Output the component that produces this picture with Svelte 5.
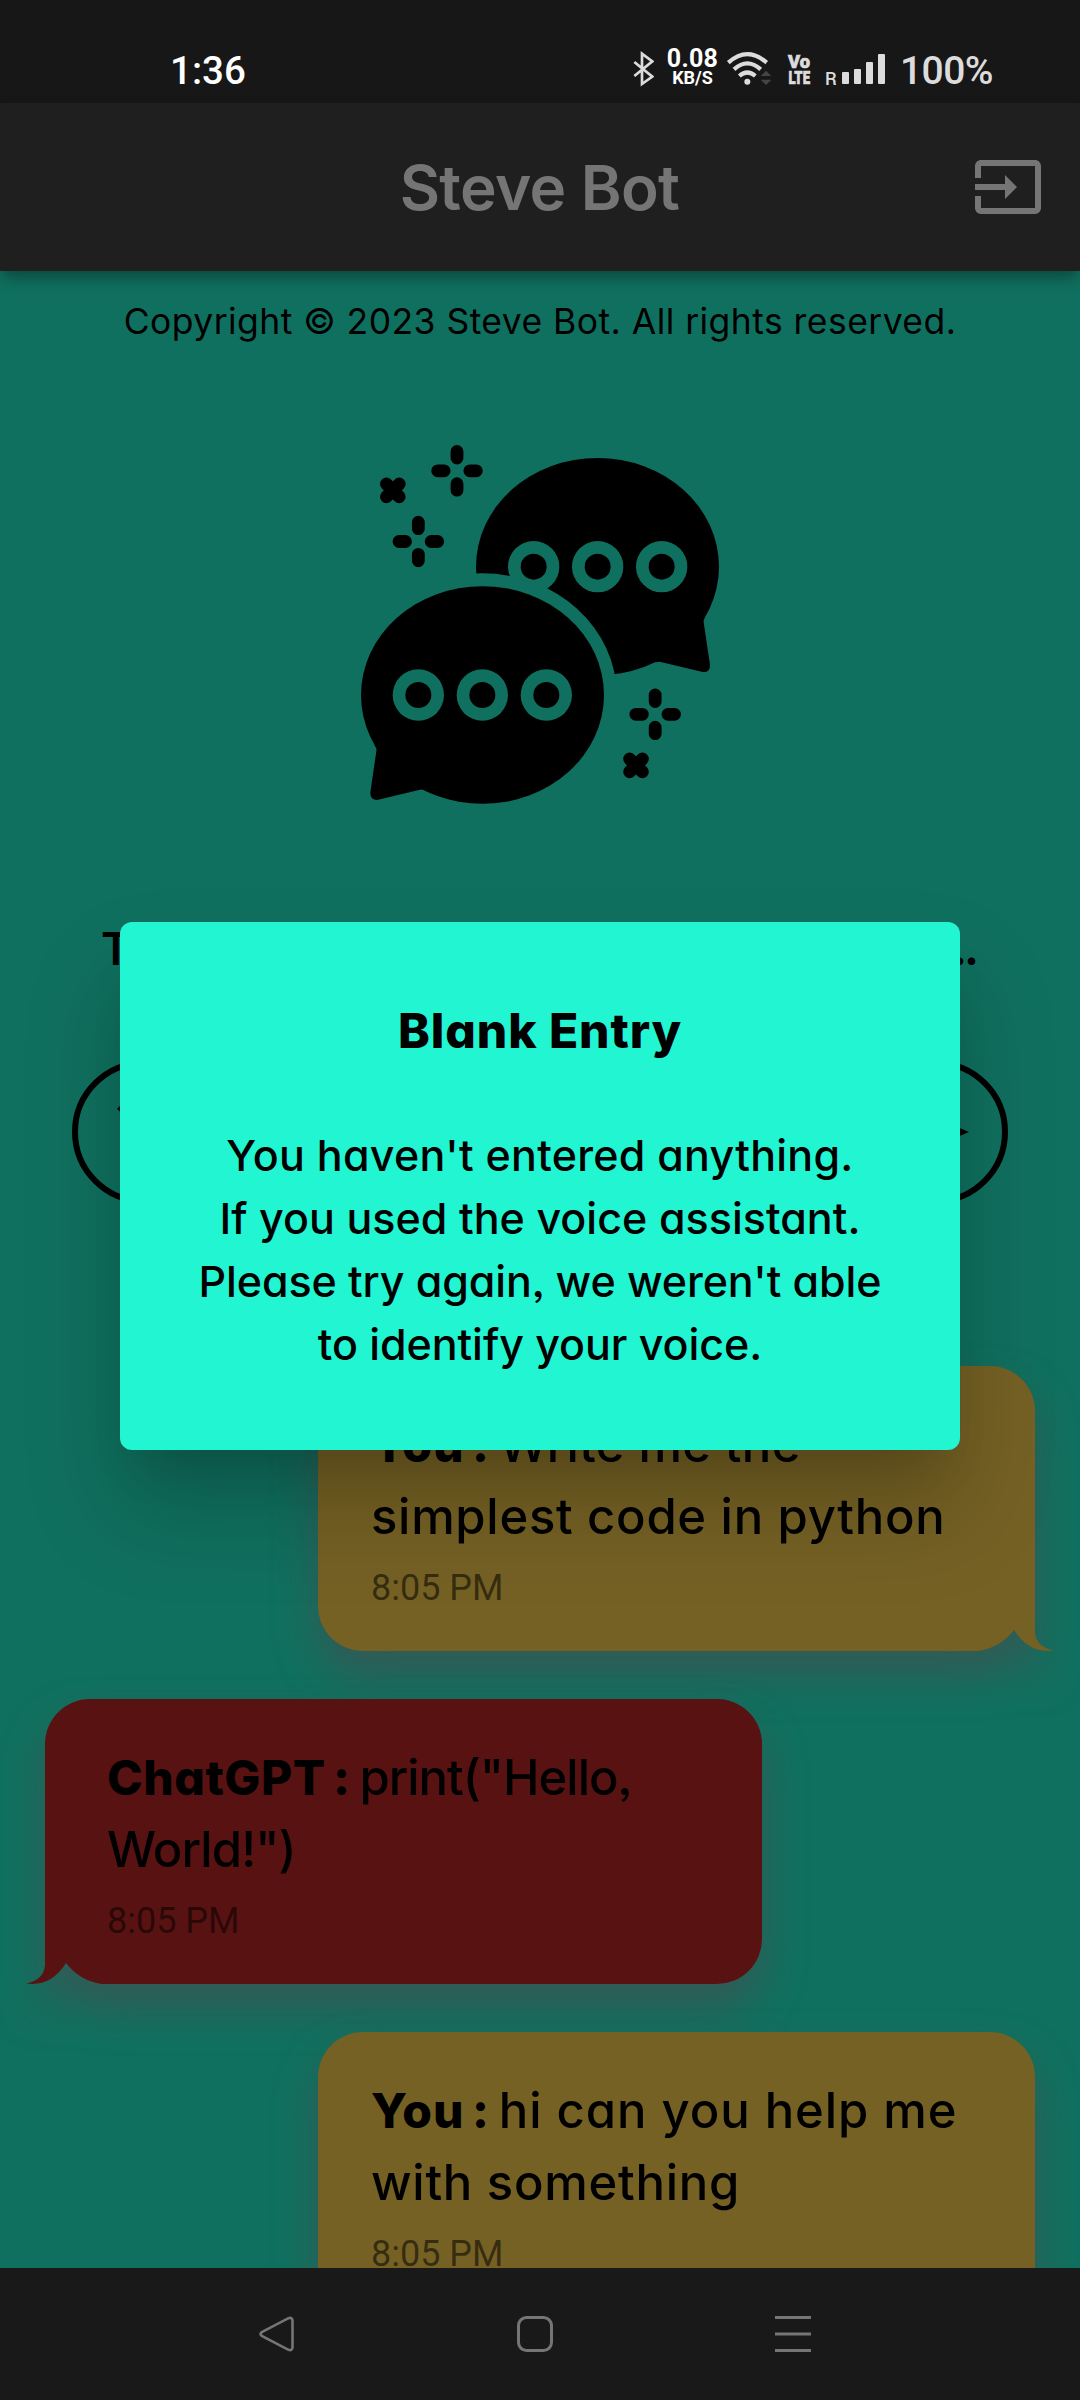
<script>
  const messages = [
    {
      author: 'You', mine: true, time: '8:05 PM', nameTrack: 1,
      first: 'Write me the', firstTrack: 0.35,
      second: 'simplest code in python', secondTrack: 0.7
    },
    {
      author: 'ChatGPT', mine: false, time: '8:05 PM', nameTrack: 0.55,
      first: 'print("Hello,', firstTrack: -1,
      second: 'World!")', secondTrack: -0.9
    },
    {
      author: 'You', mine: true, time: '8:05 PM', nameTrack: 1,
      first: 'hi can you help me', firstTrack: 0.95,
      second: 'with something', secondTrack: 0.72
    }
  ];

  const dialogLines = [
    { text: "You haven't entered anything.", track: 0.25 },
    { text: 'If you used the voice assistant.', track: 0.04 },
    { text: "Please try again, we weren't able", track: -0.1 },
    { text: 'to identify your voice.', track: -0.06 }
  ];

  const sparkles = [[351, 122.5], [235, 334.5], [945.5, 853]];
  const crosses = [[158.5, 181], [888, 1006]];
  const dots = [[581, 410], [773, 410], [965, 410]];
  const frontDots = [[235, 795], [427, 795], [619, 795]];
</script>

<div class="screen">
  <div class="status">
    <span class="clock">1:36</span>
    <div class="indicators">
      <svg width="22" height="40" viewBox="96 57 66 120">
        <path d="M103 96L157 140L126 162V71L157 94L103 138" fill="none" stroke="#dcdcdc" stroke-width="8" />
      </svg>
      <div class="speed"><span>0.08</span><small>KB/S</small></div>
      <svg class="wifi" width="47" height="40" viewBox="378 57 141 120">
        <g fill="none" stroke="#dcdcdc" stroke-width="12.5">
          <path d="M385 98Q442 47 500 98" />
          <path d="M402 118Q442 82 482 118" />
          <path d="M418 138Q442 117 466 138" />
        </g>
        <circle cx="442" cy="155" r="9" fill="#dcdcdc" />
        <path d="M482 138L498 122L514 138ZM482 149H514L498 165Z" fill="#444" />
      </svg>
      <svg class="volte" width="23" height="40" viewBox="0 0 23 40" fill="#dcdcdc" stroke="#dcdcdc" stroke-width=".7">
        <text x="0" y="18.5" textLength="22" lengthAdjust="spacingAndGlyphs">Vo</text>
        <text x="0.5" y="35" textLength="21.5" lengthAdjust="spacingAndGlyphs">LTE</text>
      </svg>
      <svg class="signal" width="61" height="40" viewBox="0 0 61 40" fill="#dcdcdc">
        <text x="0" y="36">R</text>
        <rect x="17" y="23" width="7" height="12" rx="1" />
        <rect x="29" y="20" width="7" height="15" rx="1" />
        <rect x="41" y="13" width="7" height="22" rx="1" />
        <rect x="53" y="5" width="7" height="30" rx="1" />
      </svg>
      <span class="battery">100%</span>
    </div>
  </div>

  <header>
    <h1>Steve Bot</h1>
    <svg class="exit" width="72" height="72" viewBox="0 0 24 24" fill="#757575">
      <path d="M21 3.01H3c-1.1 0-2 .9-2 2V9h2V4.99h18v14.03H3V15H1v4.01c0 1.1.9 1.98 2 1.98h18c1.1 0 2-.88 2-1.98v-14c0-1.11-.9-2-2-2zM11 16l4-4-4-4v3H1v2h10v3z" />
    </svg>
  </header>

  <main>
    <p class="copyright">Copyright © 2023 Steve Bot. All rights reserved.</p>

    <svg class="hero" width="400" height="390" viewBox="0 0 1200 1170">
      <ellipse cx="772.5" cy="410" rx="364.5" ry="326" />
      <path d="M1095 560Q1090 569 1091 577L1110 704Q1111 728 1088 726L962 696Q955 694 948 697L800 640Z" />
      {#each dots as [x, y]}
        <circle class="gap" cx={x} cy={y} r="77" />
        <circle cx={x} cy={y} r="39" />
      {/each}
      <ellipse class="gap" cx="427" cy="795" rx="403" ry="365" />
      <ellipse cx="427.5" cy="795" rx="364.5" ry="326.5" />
      <path d="M103 944Q111 955 109 964L91 1087Q90 1110 111 1110L240 1079Q248 1077 257 1082L400 1020Z" />
      {#each frontDots as [x, y]}
        <circle class="gap" cx={x} cy={y} r="77" />
        <circle cx={x} cy={y} r="39" />
      {/each}
      <g fill="none" stroke="#000" stroke-width="38.5" stroke-linecap="round">
        {#each sparkles as [x, y]}
          <path transform="translate({x} {y})" d="M0-58V-38.5M0 38.5V58M-58 0H-38.5M38.5 0H58" />
        {/each}
        {#each crosses as [x, y]}
          <path transform="translate({x} {y})" d="M-19.2-19.2L19.2 19.2M19.2-19.2L-19.2 19.2" />
        {/each}
      </g>
    </svg>

    <div class="prompt"><span>T</span><span>...</span></div>

    <div class="entry">
      <svg width="72" height="72" viewBox="0 0 24 24">
        <path d="M19 11h-1.7c0 .74-.16 1.43-.43 2.05l1.23 1.23c.56-.98.9-2.09.9-3.28zm-4.02.17c0-.06.02-.11.02-.17V5c0-1.66-1.34-3-3-3S9 3.34 9 5v.18l5.98 5.99zM4.27 3L3 4.27l6.01 6.01V11c0 1.66 1.33 3 2.99 3 .22 0 .44-.03.65-.08l1.66 1.66c-.71.33-1.5.52-2.31.52-2.76 0-5.3-2.1-5.3-5.1H5c0 3.41 2.72 6.23 6 6.72V21h2v-3.28c.91-.13 1.77-.45 2.54-.9L19.73 21 21 19.73 4.27 3z" />
      </svg>
      <svg width="72" height="72" viewBox="0 0 24 24">
        <path d="M2.01 21L23 12 2.01 3 2 10l15 2-15 2z" />
      </svg>
    </div>

    <div class="messages">
      {#each messages as m}
        <article class:mine={m.mine}>
          <svg class="shape" width="760" height="290" viewBox="0 0 760 290">
            <path d="M45 0H672A45 45 0 0 1 717 45V266Q718 281 736 284.5Q711 288 696 264Q682 282 660 285H45A45 45 0 0 1 0 240V45A45 45 0 0 1 45 0Z" />
          </svg>
          <div class="body">
            <div class="line">
              <strong style:letter-spacing="{m.nameTrack}px">{m.author} :</strong>
              <span style:letter-spacing="{m.firstTrack}px">{m.first}</span>
            </div>
            <div class="line"><span style:letter-spacing="{m.secondTrack}px">{m.second}</span></div>
            <time>{m.time}</time>
          </div>
        </article>
      {/each}
    </div>
  </main>

  <nav>
    <svg width="36" height="36" viewBox="0 0 36 36">
      <path d="M3.2 15.8L29.5 2.2Q33.5 1 33.5 5V31Q33.5 35 29.5 33.8L3.2 20.2Q-.2 18 3.2 15.8Z" />
    </svg>
    <svg width="36" height="36" viewBox="0 0 36 36">
      <rect x="1.5" y="1.5" width="33" height="33" rx="8" stroke-width="3" />
    </svg>
    <svg width="36" height="36" viewBox="0 0 36 36">
      <path d="M0 1.5H36M0 18H36M0 34.5H36" stroke-width="3" />
    </svg>
  </nav>

  <section class="dialog">
    <h2>Blank Entry</h2>
    {#each dialogLines as line}
      <p style:letter-spacing="{line.track}px">{line.text}</p>
    {/each}
  </section>
</div>

<style>
  :global(body) { background: #10705f; }
  .screen {
    position: relative;
    display: flex;
    flex-direction: column;
    width: 1080px;
    height: 2400px;
    overflow: hidden;
    background: #10705f;
    color: #000;
    font-family: Inter, "Open Sans", sans-serif;
    font-feature-settings: "cv11", "ss03";
  }
  svg { display: block; flex: none; }
  h1, h2, p { margin: 0; }

  .status {
    display: flex;
    flex: none;
    box-sizing: border-box;
    height: 103px;
    padding: 35px 87px 0 170px;
    justify-content: space-between;
    background: #171717;
    font-family: Roboto, sans-serif;
    font-weight: 500;
  }
  .clock, .battery { font-size: 38.5px; line-height: 72px; }
  .clock { color: #fff; }
  .battery {
    width: 93px;
    margin: 3px 0 0 14px;
    color: #dcdcdc;
    font-size: 39px;
    letter-spacing: -.6px;
  }
  .indicators { display: flex; height: 68px; align-items: center; }
  .speed {
    display: flex;
    flex-direction: column;
    align-items: center;
    width: 51px;
    margin: 0 8px 0 13px;
    color: #fff;
    font-weight: 700;
    font-size: 25px;
    line-height: 18px;
  }
  .speed small { font-size: 18px; line-height: 20px; }
  .speed span { letter-spacing: .3px; }
  .volte { margin: 0 14px 0 15px; font-size: 19px; font-weight: 900; overflow: visible; }
  .signal { font-size: 18px; font-weight: 500; overflow: visible; }

  header {
    position: relative;
    display: flex;
    flex: none;
    height: 168px;
    align-items: center;
    justify-content: flex-end;
    padding-right: 36px;
    background: #1f1f1f;
    color: #757575;
    box-shadow: 0 8px 15px -2px rgba(0, 0, 0, .38);
    z-index: 1;
  }
  h1 {
    flex: 1;
    padding-left: 107px;
    text-align: center;
    font-size: 62px;
    font-weight: 600;
    letter-spacing: -.6px;
  }

  main { flex: 1; min-height: 0; overflow: hidden; }
  .copyright {
    padding-top: 26px;
    line-height: 50px;
    text-align: center;
    font-size: 35.5px;
    letter-spacing: .45px;
  }
  .hero { margin: 83px 0 0 340px; }
  .gap { fill: #10705f; }
  .prompt {
    display: flex;
    justify-content: space-between;
    margin-top: 99px;
    padding: 0 104px 0 101px;
    line-height: 60px;
    font-size: 45px;
    font-weight: 600;
  }
  .prompt span:last-child { letter-spacing: -3px; font-weight: 700; }
  .entry {
    display: flex;
    box-sizing: border-box;
    height: 144px;
    margin: 81px 72px 0;
    padding: 0 30px;
    align-items: center;
    justify-content: space-between;
    border: 6px solid #000;
    border-radius: 72px;
  }

  .messages {
    display: flex;
    flex-direction: column;
    gap: 48px;
    margin-top: 162px;
    padding: 0 45px;
  }
  article {
    position: relative;
    flex: none;
    width: 717px;
    height: 285px;
  }
  article.mine { align-self: flex-end; }
  .shape {
    position: absolute;
    top: 0;
    right: 0;
    overflow: visible;
    fill: #591212;
    transform: scaleX(-1);
    filter: drop-shadow(0 24px 20px rgba(76, 74, 80, .58));
  }
  .mine .shape { left: 0; right: auto; fill: #756124; transform: none; }
  .body { position: relative; padding: 42.5px 0 0 62px; }
  .mine .body { padding-left: 53px; }
  .line {
    display: flex;
    align-items: baseline;
    gap: 9px;
    height: 72px;
    line-height: 72px;
    white-space: nowrap;
    font-size: 49px;
    font-weight: 500;
  }
  strong { font-size: 48px; font-weight: 800; word-spacing: -4px; }
  time {
    display: block;
    margin-top: 14.5px;
    font: 36px/42px Roboto, sans-serif;
    color: rgba(0, 0, 0, .54);
  }

  nav {
    display: flex;
    flex: none;
    box-sizing: border-box;
    height: 132px;
    padding: 48px 0 0 259px;
    gap: 222px;
    background: #191919;
    position: relative;
  }
  nav svg { fill: none; stroke: #757575; stroke-width: 2.6; }

  .dialog {
    position: absolute;
    top: 921.5px;
    left: 120px;
    box-sizing: border-box;
    width: 840px;
    height: 528px;
    padding-top: 77.5px;
    border-radius: 12px;
    background: #22f5d2;
    text-align: center;
    box-shadow: 0 33px 45px -21px rgba(0, 0, 0, .15), 0 60px 95px 4px rgba(0, 0, 0, .17);
    z-index: 2;
  }
  h2 {
    margin-bottom: 61px;
    line-height: 64px;
    font-size: 48px;
    font-weight: 800;
    letter-spacing: .9px;
  }
  .dialog p { line-height: 63px; font-size: 43px; font-weight: 500; }
</style>
